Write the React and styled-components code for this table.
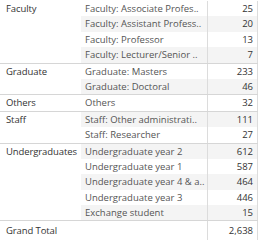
import React from "react";
import styled, { createGlobalStyle } from "styled-components";

const GlobalStyle = createGlobalStyle`
  body {
    margin: 0;
    background: #ffffff;
    font-family: "Open Sans", "Liberation Sans", sans-serif;
  }
`;

const groups = [
  {
    name: "Faculty",
    rows: [
      ["Faculty: Associate Profes..", "25"],
      ["Faculty: Assistant Profess..", "20"],
      ["Faculty: Professor", "13"],
      ["Faculty: Lecturer/Senior ..", "7"],
    ],
  },
  {
    name: "Graduate",
    rows: [
      ["Graduate: Masters", "233"],
      ["Graduate: Doctoral", "46"],
    ],
  },
  { name: "Others", rows: [["Others", "32"]] },
  {
    name: "Staff",
    rows: [
      ["Staff: Other administrati..", "111"],
      ["Staff: Researcher", "27"],
    ],
  },
  {
    name: "Undergraduates",
    rows: [
      ["Undergraduate year 2", "612"],
      ["Undergraduate year 1", "587"],
      ["Undergraduate year 4 & a..", "464"],
      ["Undergraduate year 3", "446"],
      ["Exchange student", "15"],
    ],
  },
];

export default function App() {
  let index = 0;
  return (
    <>
      <GlobalStyle />
      <Table>
        {groups.map((g) => (
          <Group key={g.name}>
            <Header>{g.name}</Header>
            <Rows>
              {g.rows.map(([label, value]) => {
                const alt = index++ % 2 === 1;
                return (
                  <Row key={label} $alt={alt}>
                    <Label>{label}</Label>
                    <Value>{value}</Value>
                  </Row>
                );
              })}
            </Rows>
          </Group>
        ))}
        <TotalRow>
          <Header $total>Grand Total</Header>
          <Row $total>
            <Label />
            <Value>2,638</Value>
          </Row>
        </TotalRow>
      </Table>
    </>
  );
}

const Table = styled.div`
  width: 258px;
  display: flex;
  flex-direction: column;
  font-size: 9.5px;
  padding-top: 1px;
`;

const Group = styled.div`
  display: flex;
  border-bottom: 1px solid #d6d6d6;
`;

const TotalRow = styled.div`
  display: flex;
  height: 19px;
`;

const Header = styled.div`
  width: 81px;
  flex-shrink: 0;
  padding-left: 6px;
  box-sizing: border-box;
  color: #333333;
  line-height: ${(p) => (p.$total ? "19px" : "15.4px")};
  white-space: nowrap;
  letter-spacing: -0.1px;
`;

const Rows = styled.div`
  flex: 1;
  display: flex;
  flex-direction: column;
`;

const Row = styled.div`
  display: flex;
  flex: ${(p) => (p.$total ? 1 : "none")};
  height: ${(p) => (p.$total ? "auto" : "15.4px")};
  line-height: ${(p) => (p.$total ? "19px" : "15.4px")};
  background: ${(p) => (p.$alt ? "#f4f4f4" : "#ffffff")};
  border-right: 1px solid #dcdcdc;
`;

const Label = styled.div`
  width: 126px;
  flex-shrink: 0;
  padding-left: 4px;
  box-sizing: border-box;
  color: #555555;
  white-space: nowrap;
  overflow: hidden;
`;

const Value = styled.div`
  flex: 1;
  border-left: 1px solid #dcdcdc;
  text-align: right;
  padding-right: 4px;
  color: #333333;
`;
